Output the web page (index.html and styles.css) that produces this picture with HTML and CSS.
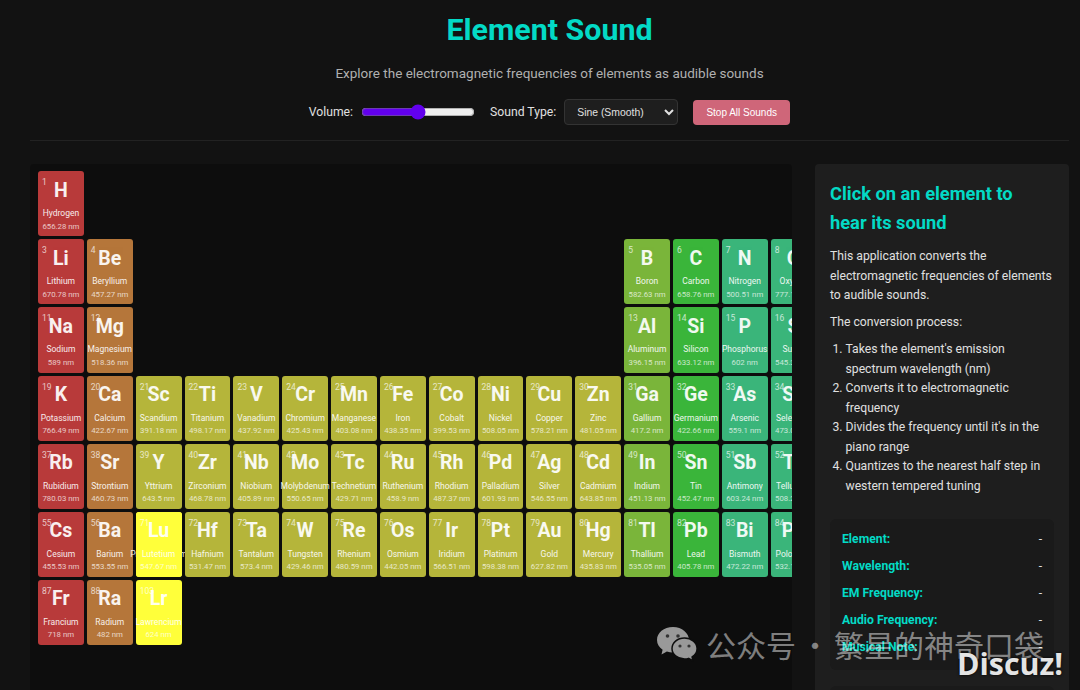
FILE: index.html
```html
<!DOCTYPE html>
<html lang="en">
<head>
  <meta charset="UTF-8" />
  <title>Element Sound</title>
  <link rel="stylesheet" href="styles.css">
</head>
<body>

  <div class="page">
    <header class="header">
      <h1>Element Sound</h1>
      <p class="subtitle">Explore the electromagnetic frequencies of elements as audible sounds</p>
      <div class="controls">
        <label class="ctl">Volume:
          <input class="volume" type="range" min="0" max="100" value="50">
        </label>
        <label class="ctl">Sound Type:
          <select class="sound-type">
            <option>Sine (Smooth)</option>
            <option>Square</option>
            <option>Triangle</option>
            <option>Sawtooth</option>
          </select>
        </label>
        <button class="stop">Stop All Sounds</button>
      </div>
    </header>

    <main class="main">
      <div class="table-wrap">
        <div class="table">
          <div class="el red"><span class="num">1</span><b class="sym">H</b><span class="name">Hydrogen</span><span class="wl">656.28 nm</span></div>

          <div class="el red col-1"><span class="num">3</span><b class="sym">Li</b><span class="name">Lithium</span><span class="wl">670.78 nm</span></div>
          <div class="el orange"><span class="num">4</span><b class="sym">Be</b><span class="name">Beryllium</span><span class="wl">457.27 nm</span></div>
          <div class="el lime col-13"><span class="num">5</span><b class="sym">B</b><span class="name">Boron</span><span class="wl">582.63 nm</span></div>
          <div class="el green"><span class="num">6</span><b class="sym">C</b><span class="name">Carbon</span><span class="wl">658.76 nm</span></div>
          <div class="el teal"><span class="num">7</span><b class="sym">N</b><span class="name">Nitrogen</span><span class="wl">500.51 nm</span></div>
          <div class="el teal"><span class="num">8</span><b class="sym">O</b><span class="name">Oxygen</span><span class="wl">777.19 nm</span></div>

          <div class="el red col-1"><span class="num">11</span><b class="sym">Na</b><span class="name">Sodium</span><span class="wl">589 nm</span></div>
          <div class="el orange"><span class="num">12</span><b class="sym">Mg</b><span class="name">Magnesium</span><span class="wl">518.36 nm</span></div>
          <div class="el lime col-13"><span class="num">13</span><b class="sym">Al</b><span class="name">Aluminum</span><span class="wl">396.15 nm</span></div>
          <div class="el green"><span class="num">14</span><b class="sym">Si</b><span class="name">Silicon</span><span class="wl">633.12 nm</span></div>
          <div class="el teal"><span class="num">15</span><b class="sym">P</b><span class="name">Phosphorus</span><span class="wl">602 nm</span></div>
          <div class="el teal"><span class="num">16</span><b class="sym">S</b><span class="name">Sulfur</span><span class="wl">545.38 nm</span></div>

          <div class="el red col-1"><span class="num">19</span><b class="sym">K</b><span class="name">Potassium</span><span class="wl">766.49 nm</span></div>
          <div class="el orange"><span class="num">20</span><b class="sym">Ca</b><span class="name">Calcium</span><span class="wl">422.67 nm</span></div>
          <div class="el olive"><span class="num">21</span><b class="sym">Sc</b><span class="name">Scandium</span><span class="wl">391.18 nm</span></div>
          <div class="el olive"><span class="num">22</span><b class="sym">Ti</b><span class="name">Titanium</span><span class="wl">498.17 nm</span></div>
          <div class="el olive"><span class="num">23</span><b class="sym">V</b><span class="name">Vanadium</span><span class="wl">437.92 nm</span></div>
          <div class="el olive"><span class="num">24</span><b class="sym">Cr</b><span class="name">Chromium</span><span class="wl">425.43 nm</span></div>
          <div class="el olive"><span class="num">25</span><b class="sym">Mn</b><span class="name">Manganese</span><span class="wl">403.08 nm</span></div>
          <div class="el olive"><span class="num">26</span><b class="sym">Fe</b><span class="name">Iron</span><span class="wl">438.35 nm</span></div>
          <div class="el olive"><span class="num">27</span><b class="sym">Co</b><span class="name">Cobalt</span><span class="wl">399.53 nm</span></div>
          <div class="el olive"><span class="num">28</span><b class="sym">Ni</b><span class="name">Nickel</span><span class="wl">508.05 nm</span></div>
          <div class="el olive"><span class="num">29</span><b class="sym">Cu</b><span class="name">Copper</span><span class="wl">578.21 nm</span></div>
          <div class="el olive"><span class="num">30</span><b class="sym">Zn</b><span class="name">Zinc</span><span class="wl">481.05 nm</span></div>
          <div class="el lime"><span class="num">31</span><b class="sym">Ga</b><span class="name">Gallium</span><span class="wl">417.2 nm</span></div>
          <div class="el green"><span class="num">32</span><b class="sym">Ge</b><span class="name">Germanium</span><span class="wl">422.66 nm</span></div>
          <div class="el teal"><span class="num">33</span><b class="sym">As</b><span class="name">Arsenic</span><span class="wl">559.1 nm</span></div>
          <div class="el teal"><span class="num">34</span><b class="sym">Se</b><span class="name">Selenium</span><span class="wl">473.08 nm</span></div>

          <div class="el red col-1"><span class="num">37</span><b class="sym">Rb</b><span class="name">Rubidium</span><span class="wl">780.03 nm</span></div>
          <div class="el orange"><span class="num">38</span><b class="sym">Sr</b><span class="name">Strontium</span><span class="wl">460.73 nm</span></div>
          <div class="el olive"><span class="num">39</span><b class="sym">Y</b><span class="name">Yttrium</span><span class="wl">643.5 nm</span></div>
          <div class="el olive"><span class="num">40</span><b class="sym">Zr</b><span class="name">Zirconium</span><span class="wl">468.78 nm</span></div>
          <div class="el olive"><span class="num">41</span><b class="sym">Nb</b><span class="name">Niobium</span><span class="wl">405.89 nm</span></div>
          <div class="el olive"><span class="num">42</span><b class="sym">Mo</b><span class="name">Molybdenum</span><span class="wl">550.65 nm</span></div>
          <div class="el olive"><span class="num">43</span><b class="sym">Tc</b><span class="name">Technetium</span><span class="wl">429.71 nm</span></div>
          <div class="el olive"><span class="num">44</span><b class="sym">Ru</b><span class="name">Ruthenium</span><span class="wl">458.9 nm</span></div>
          <div class="el olive"><span class="num">45</span><b class="sym">Rh</b><span class="name">Rhodium</span><span class="wl">487.37 nm</span></div>
          <div class="el olive"><span class="num">46</span><b class="sym">Pd</b><span class="name">Palladium</span><span class="wl">601.93 nm</span></div>
          <div class="el olive"><span class="num">47</span><b class="sym">Ag</b><span class="name">Silver</span><span class="wl">546.55 nm</span></div>
          <div class="el olive"><span class="num">48</span><b class="sym">Cd</b><span class="name">Cadmium</span><span class="wl">643.85 nm</span></div>
          <div class="el lime"><span class="num">49</span><b class="sym">In</b><span class="name">Indium</span><span class="wl">451.13 nm</span></div>
          <div class="el green"><span class="num">50</span><b class="sym">Sn</b><span class="name">Tin</span><span class="wl">452.47 nm</span></div>
          <div class="el teal"><span class="num">51</span><b class="sym">Sb</b><span class="name">Antimony</span><span class="wl">603.24 nm</span></div>
          <div class="el teal"><span class="num">52</span><b class="sym">Te</b><span class="name">Tellurium</span><span class="wl">508.26 nm</span></div>

          <div class="el red col-1"><span class="num">55</span><b class="sym">Cs</b><span class="name">Cesium</span><span class="wl">455.53 nm</span></div>
          <div class="el orange"><span class="num">56</span><b class="sym">Ba</b><span class="name">Barium</span><span class="wl">553.55 nm</span></div>
          <!-- lanthanides pile up in this slot, only the last one shows -->
          <div class="el yellow slot-6"><span class="num">59</span><b class="sym">Pr</b><span class="name">Praseodymium</span><span class="wl">495.14 nm</span></div>
          <div class="el yellow slot-6"><span class="num">71</span><b class="sym">Lu</b><span class="name">Lutetium</span><span class="wl">547.67 nm</span></div>
          <div class="el olive"><span class="num">72</span><b class="sym">Hf</b><span class="name">Hafnium</span><span class="wl">531.47 nm</span></div>
          <div class="el olive"><span class="num">73</span><b class="sym">Ta</b><span class="name">Tantalum</span><span class="wl">573.4 nm</span></div>
          <div class="el olive"><span class="num">74</span><b class="sym">W</b><span class="name">Tungsten</span><span class="wl">429.46 nm</span></div>
          <div class="el olive"><span class="num">75</span><b class="sym">Re</b><span class="name">Rhenium</span><span class="wl">480.59 nm</span></div>
          <div class="el olive"><span class="num">76</span><b class="sym">Os</b><span class="name">Osmium</span><span class="wl">442.05 nm</span></div>
          <div class="el olive"><span class="num">77</span><b class="sym">Ir</b><span class="name">Iridium</span><span class="wl">566.51 nm</span></div>
          <div class="el olive"><span class="num">78</span><b class="sym">Pt</b><span class="name">Platinum</span><span class="wl">598.38 nm</span></div>
          <div class="el olive"><span class="num">79</span><b class="sym">Au</b><span class="name">Gold</span><span class="wl">627.82 nm</span></div>
          <div class="el olive"><span class="num">80</span><b class="sym">Hg</b><span class="name">Mercury</span><span class="wl">435.83 nm</span></div>
          <div class="el lime"><span class="num">81</span><b class="sym">Tl</b><span class="name">Thallium</span><span class="wl">535.05 nm</span></div>
          <div class="el green"><span class="num">82</span><b class="sym">Pb</b><span class="name">Lead</span><span class="wl">405.78 nm</span></div>
          <div class="el teal"><span class="num">83</span><b class="sym">Bi</b><span class="name">Bismuth</span><span class="wl">472.22 nm</span></div>
          <div class="el teal"><span class="num">84</span><b class="sym">Po</b><span class="name">Polonium</span><span class="wl">532.11 nm</span></div>

          <div class="el red col-1"><span class="num">87</span><b class="sym">Fr</b><span class="name">Francium</span><span class="wl">718 nm</span></div>
          <div class="el orange"><span class="num">88</span><b class="sym">Ra</b><span class="name">Radium</span><span class="wl">482 nm</span></div>
          <div class="el yellow slot-7"><span class="num">103</span><b class="sym">Lr</b><span class="name">Lawrencium</span><span class="wl">624 nm</span></div>
        </div>
      </div>

      <aside class="side">
        <h2>Click on an element to hear its sound</h2>
        <p>This application converts the electromagnetic frequencies of elements to audible sounds.</p>
        <p>The conversion process:</p>
        <ol>
          <li>Takes the element's emission spectrum wavelength (nm)</li>
          <li>Converts it to electromagnetic frequency</li>
          <li>Divides the frequency until it's in the piano range</li>
          <li>Quantizes to the nearest half step in western tempered tuning</li>
        </ol>
        <div class="card">
          <div class="row"><span class="key">Element:</span><span>-</span></div>
          <div class="row"><span class="key">Wavelength:</span><span>-</span></div>
          <div class="row"><span class="key">EM Frequency:</span><span>-</span></div>
          <div class="row"><span class="key">Audio Frequency:</span><span>-</span></div>
          <div class="row"><span class="key">Musical Note:</span><span>-</span></div>
        </div>
        <div class="card card-next"></div>
      </aside>
    </main>
  </div>

  <div class="watermark">
    <svg class="wechat" width="42" height="36" viewBox="0 0 42 36">
      <path d="M17 1C7.8 1 1 6.800 1 14c0 4 2.200 7.400 5.600 9.800L5.500 28.500l5.400-2.900c1.900.6 4 .9 6.100.9 9 0 16-5.700 16-12.500S26 1 17 1z" fill="#999"/>
      <path d="M28.500 12C21.300 12 16 16.700 16 22.500S21.300 33 28.500 33c1.400 0 2.800-.2 4.100-.6l4.400 2.600-.9-4c3.200-2 5-5 5-8.500C41 16.700 35.700 12 28.500 12z" fill="#999" stroke="#0d0d0d" stroke-width="1.500"/>
      <circle cx="11.500" cy="10" r="1.800" fill="#333"/>
      <circle cx="22" cy="10" r="1.800" fill="#333"/>
      <circle cx="24" cy="20" r="1.600" fill="#333"/>
      <circle cx="33" cy="20" r="1.600" fill="#333"/>
    </svg>
    <span class="wm-text">公众号</span>
    <span class="wm-text">·</span>
    <span class="wm-text">繁星的神奇口袋</span>
  </div>
  <div class="discuz">Discuz!</div>

</body>
</html>
```
FILE: styles.css
```css
html, body {
  margin: 0;
  height: 100%;
  overflow: hidden;
  background: #121212;
  color: #e0e0e0;
  font-family: Roboto, sans-serif;
}
.page {
  padding: 0 11px 0 30px;
}
.header {
  display: flex;
  flex-direction: column;
  align-items: center;
  height: 140px;
  border-bottom: 1px solid #222;
}
h1 {
  margin: 11px 0 0;
  font-size: 30.4px;
  line-height: 38px;
  font-weight: 700;
  color: #03dac6;
}
.subtitle {
  margin: 15px 0 0;
  font-size: 13.5px;
  line-height: 18px;
  color: #b0b0b0;
}
.controls {
  display: flex;
  align-items: center;
  gap: 15px;
  margin-top: 17px;
}
.ctl {
  display: flex;
  align-items: center;
  gap: 8px;
  font-size: 12.2px;
}
.volume {
  width: 114px;
  margin: 0;
  accent-color: #6200ee;
}
.sound-type {
  width: 114px;
  height: 26px;
  padding: 0 8px;
  background: #1e1e1e;
  color: #e0e0e0;
  border: 1px solid #333;
  border-radius: 4px;
  font-family: "Liberation Sans", sans-serif;
  font-size: 10.4px;
}
.stop {
  height: 25px;
  width: 97px;
  padding: 0;
  background: #cf6679;
  color: #fff;
  border: none;
  border-radius: 4px;
  font-family: "Liberation Sans", sans-serif;
  font-size: 10px;
}

.main {
  display: flex;
  gap: 23px;
  margin-top: 23px;
}
.table-wrap {
  width: 762px;
  height: 600px;
  overflow: hidden;
  flex: none;
  background: #0d0d0d;
  border-radius: 4px;
}
.table {
  display: grid;
  grid-template-columns: repeat(18, 45.85px);
  grid-auto-rows: 65.1px;
  gap: 3px;
  padding: 7.3px 8px;
}
.el {
  position: relative;
  display: flex;
  flex-direction: column;
  align-items: center;
  padding-top: 8.5px;
  box-sizing: border-box;
  border-radius: 3px;
  color: #fff;
  white-space: nowrap;
}
.num {
  position: absolute;
  top: 6px;
  left: 4px;
  font-size: 8.5px;
  line-height: 10px;
  opacity: .7;
}
.sym {
  font-size: 19.5px;
  line-height: 22px;
  font-weight: 700;
  opacity: .92;
}
.name {
  margin-top: 6.5px;
  font-size: 8.5px;
  line-height: 11px;
  opacity: .9;
}
.wl {
  margin-top: 1.5px;
  font-size: 7.8px;
  line-height: 11px;
  opacity: .7;
}
.red { background: #b83a3a; }
.orange { background: #b5763a; }
.olive { background: #b5b53a; }
.lime { background: #7ab53a; }
.green { background: #3ab53a; }
.teal { background: #3ab57a; }
.yellow { background: #ffff3a; }
.col-1 { grid-column: 1; }
.col-13 { grid-column: 13; }
.slot-6 { grid-column: 3; grid-row: 6; }
.slot-7 { grid-column: 3; grid-row: 7; }

.side {
  flex: 1;
  padding: 15px;
  background: #1e1e1e;
  border-radius: 4px;
  font-size: 12.2px;
  line-height: 19.55px;
}
h2 {
  max-width: 200px;
  margin: 0 0 10px;
  font-size: 18.3px;
  line-height: 29px;
  font-weight: 700;
  color: #03dac6;
}
.side p {
  margin: 0 0 7px;
}
ol {
  margin: 8px 0 0;
  padding-left: 15.5px;
}
.card {
  margin-top: 22px;
  padding: 8px 12px;
  background: #1a1a1a;
  border-radius: 6px;
}
.row {
  display: flex;
  justify-content: space-between;
  height: 27px;
  align-items: center;
}
.key {
  color: #03dac6;
  font-weight: 700;
}
.card-next {
  margin-top: 16px;
  height: 100px;
}

.watermark {
  position: absolute;
  left: 656px;
  top: 626px;
  display: flex;
  align-items: center;
  height: 36px;
  gap: 4px;
  color: rgba(255, 255, 255, .48);
  font-family: "Noto Sans CJK SC", sans-serif;
  font-size: 30px;
}
.wechat {
  margin-right: 4px;
}
.discuz {
  position: absolute;
  left: 957px;
  top: 645px;
  font-family: "Open Sans", sans-serif;
  font-size: 30.4px;
  line-height: 38px;
  font-weight: 700;
  color: #e4e4e4;
  text-shadow: 0 0 3px #000;
}
```
